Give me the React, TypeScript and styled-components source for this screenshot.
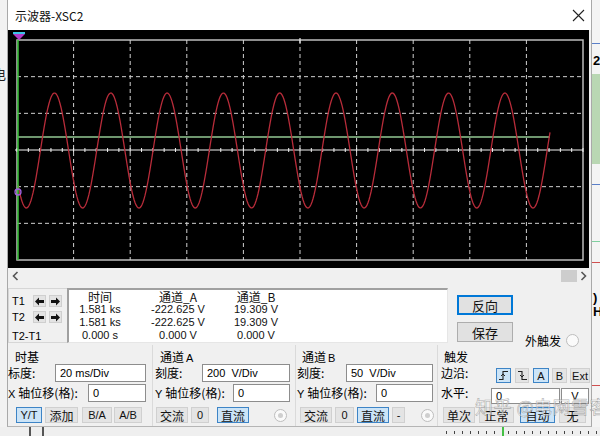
import React from 'react';
import styled, { createGlobalStyle } from 'styled-components';

const LATIN = `"Liberation Sans", "Noto Sans CJK SC", sans-serif`;
const CJK = `"Noto Sans CJK SC", "Liberation Sans", sans-serif`;

const Global = createGlobalStyle`
  html, body { margin: 0; padding: 0; width: 600px; height: 436px; overflow: hidden; background: #ececec; }
  * { box-sizing: border-box; }
`;

const Desktop = styled.div`
  width: 600px;
  height: 436px;
  display: grid;
  grid-template-columns: 7px 585px 8px;
  grid-template-rows: 427px 9px;
  background: #ececec;
  overflow: hidden;
  font-family: ${CJK};
  color: #000;
`;

const LeftStrip = styled.div`
  background: #f2f2f2;
  overflow: hidden;
  display: flex;
  flex-direction: column;
  padding-top: 66px;
  font-size: 13px;
  line-height: 16px;
`;

const ClippedGlyph = styled.span<{ $color?: string }>`
  display: block;
  margin-left: -7px;
  color: ${(p) => p.$color || '#222'};
`;

const RightStrip = styled.div`
  background: #f4f4f4;
  overflow: hidden;
  display: flex;
  flex-direction: column;
`;

const HLine = styled.div<{ $color: string; $top: number; $h?: number }>`
  margin-top: ${(p) => p.$top}px;
  height: ${(p) => p.$h || 1}px;
  background: ${(p) => p.$color};
  flex-shrink: 0;
`;

const StripText = styled.div<{ $top: number }>`
  margin-top: ${(p) => p.$top}px;
  font-family: ${LATIN};
  font-size: 13px;
  font-weight: bold;
  line-height: 14px;
  margin-left: 1px;
  flex-shrink: 0;
`;

const BottomStrip = styled.div`
  grid-column: 1 / 4;
  background: #efefef;
  display: flex;
  align-items: stretch;
`;

const Bar = styled.div<{ $left: number; $w?: number; $color?: string }>`
  margin-left: ${(p) => p.$left}px;
  width: ${(p) => p.$w || 2}px;
  background: ${(p) => p.$color || '#555'};
  flex-shrink: 0;
`;

const DashBar = styled.div<{ $left: number; $w: number }>`
  margin-left: ${(p) => p.$left}px;
  width: ${(p) => p.$w}px;
  background: repeating-linear-gradient(90deg, #444 0 1px, transparent 1px 8px);
  height: 3px;
  margin-top: 4px;
  flex-shrink: 0;
`;

const Window = styled.div`
  display: flex;
  flex-direction: column;
  background: #f0f0f0;
  border-left: 1px solid #a9a9a9;
  border-right: 1px solid #a9a9a9;
  border-bottom: 1px solid #b5b5b5;
  position: relative;
`;

const TitleBar = styled.div`
  height: 30px;
  background: #ffffff;
  display: flex;
  align-items: center;
  justify-content: space-between;
  padding-left: 7px;
  flex-shrink: 0;
`;

const Title = styled.span`
  font-family: ${CJK};
  font-size: 12px;
  color: #111;
`;

const CloseBox = styled.div`
  width: 26px;
  height: 30px;
  display: flex;
  align-items: center;
  justify-content: center;
`;

const Scope = styled.div`
  width: 581px;
  height: 238px;
  background: #000;
  flex-shrink: 0;
`;

const ScrollRow = styled.div`
  height: 16px;
  display: flex;
  align-items: center;
  flex-shrink: 0;
`;

const ScrollArrow = styled.div<{ $ml?: number }>`
  width: 12px;
  height: 16px;
  margin-left: ${(p) => p.$ml || 0}px;
  display: flex;
  align-items: center;
  justify-content: center;
`;

const Spacer = styled.div<{ $w?: number }>`
  flex: ${(p) => (p.$w !== undefined ? `0 0 ${p.$w}px` : '1')};
`;

const Thumb = styled.div`
  width: 16px;
  height: 12px;
  background: #cdcdcd;
`;

const ReadoutRow = styled.div`
  height: 61px;
  display: flex;
  align-items: flex-start;
  padding-top: 4px;
  flex-shrink: 0;
`;

const CursorBox = styled.div`
  width: 59px;
  height: 55px;
  border: 1px solid #d6d6d6;
  border-right: none;
  display: flex;
  flex-direction: column;
  padding-top: 6px;
  padding-left: 3px;
`;

const CursorRow = styled.div<{ $mt?: number }>`
  display: flex;
  align-items: center;
  height: 13px;
  margin-top: ${(p) => p.$mt || 0}px;
  font-family: ${LATIN};
  font-size: 11px;
`;

const CursorLabel = styled.span`
  width: 21px;
  flex-shrink: 0;
`;

const ArrowBtn = styled.div<{ $ml?: number }>`
  width: 13px;
  height: 12px;
  margin-left: ${(p) => p.$ml || 0}px;
  background: #e3e3e3;
  border: 1px solid #cfcfcf;
  display: flex;
  align-items: center;
  justify-content: center;
`;

const DataBox = styled.div`
  width: 381px;
  height: 55px;
  background: #fff;
  border-top: 2px solid #a0a0a0;
  border-left: 2px solid #a0a0a0;
  border-right: 1px solid #e6e6e6;
  border-bottom: 1px solid #e6e6e6;
  display: grid;
  grid-template-columns: 62px 94px 62px;
  grid-auto-rows: 13px;
  align-content: start;
`;

const Cell = styled.div<{ $head?: boolean }>`
  text-align: center;
  white-space: nowrap;
  font-family: ${(p) => (p.$head ? CJK : LATIN)};
  font-size: ${(p) => (p.$head ? 12 : 11)}px;
  line-height: 13px;
  color: #111;
`;

const ButtonCol = styled.div`
  margin-left: 9px;
  margin-top: 7px;
  width: 56px;
  display: flex;
  flex-direction: column;
  gap: 7px;
`;

const BigButton = styled.div<{ $focus?: boolean }>`
  height: 20px;
  background: #e1e1e1;
  border: ${(p) => (p.$focus ? '2px solid #0078d7' : '1px solid #adadad')};
  display: flex;
  align-items: center;
  justify-content: center;
  font-family: ${CJK};
  font-size: 13px;
  color: #111;
`;

const ExtTrig = styled.div`
  margin-left: 12px;
  margin-top: 45px;
  height: 14px;
  display: flex;
  align-items: center;
  gap: 5px;
  font-size: 12px;
`;

const Radio = styled.div<{ $ml?: number }>`
  width: 13px;
  height: 13px;
  border-radius: 50%;
  border: 1px solid #bdbdbd;
  background: #fafafa;
  margin-left: ${(p) => p.$ml || 0}px;
  flex-shrink: 0;
  display: flex;
  align-items: center;
  justify-content: center;
`;

const RadioDot = styled.div`
  width: 5px;
  height: 5px;
  border-radius: 50%;
  background: #cfcfcf;
`;

const ControlsRow = styled.div`
  height: 81px;
  display: flex;
  position: relative;
`;

const Group = styled.div<{ $w: number; $pl: number; $pr: number; $divider?: boolean }>`
  width: ${(p) => p.$w}px;
  padding-left: ${(p) => p.$pl}px;
  padding-right: ${(p) => p.$pr}px;
  padding-top: 5px;
  border-left: ${(p) => (p.$divider ? '1px solid #dadada' : 'none')};
  display: flex;
  flex-direction: column;
  flex-shrink: 0;
`;

const GroupTitle = styled.div<{ $ml: number }>`
  height: 14px;
  line-height: 14px;
  margin-left: ${(p) => p.$ml}px;
  font-size: 12px;
  white-space: nowrap;
`;

const SubLetter = styled.span`
  font-family: ${LATIN};
  font-size: 11px;
  margin-left: 2px;
`;

const FieldRow = styled.div<{ $mt?: number; $align?: string }>`
  height: 18px;
  margin-top: ${(p) => p.$mt || 0}px;
  display: flex;
  align-items: ${(p) => p.$align || 'center'};
  justify-content: space-between;
`;

const Label = styled.span`
  font-size: 12px;
  white-space: nowrap;
  line-height: 18px;
`;

const LatinX = styled.span`
  font-family: ${LATIN};
  font-size: 11px;
  margin-right: 3px;
`;

const Input = styled.div<{ $w: number; $h?: number; $center?: boolean }>`
  width: ${(p) => p.$w}px;
  height: ${(p) => p.$h || 18}px;
  background: #fff;
  border: 1px solid #8d8d8d;
  font-family: ${LATIN};
  font-size: 11px;
  display: flex;
  align-items: center;
  justify-content: ${(p) => (p.$center ? 'center' : 'flex-start')};
  padding-left: ${(p) => (p.$center ? 0 : 4)}px;
  white-space: pre;
  flex-shrink: 0;
`;

const InputPair = styled.div`
  display: flex;
  align-self: flex-start;
  margin-top: 4px;
  gap: 1px;
`;

const BtnRow = styled.div<{ $ml: number }>`
  height: 16px;
  margin-top: 5px;
  margin-left: ${(p) => p.$ml}px;
  display: flex;
  align-items: center;
`;

const SmallBtn = styled.div<{ $w: number; $ml?: number; $on?: boolean; $latin?: boolean; $h?: number }>`
  width: ${(p) => p.$w}px;
  height: ${(p) => p.$h || 16}px;
  margin-left: ${(p) => p.$ml || 0}px;
  background: ${(p) => (p.$on ? '#cce4f7' : '#e4e4e4')};
  border: 1px solid ${(p) => (p.$on ? '#3d84c6' : '#d0d0d0')};
  font-family: ${(p) => (p.$latin ? LATIN : CJK)};
  font-size: ${(p) => (p.$latin ? 11 : 12)}px;
  display: flex;
  align-items: center;
  justify-content: center;
  flex-shrink: 0;
  color: #111;
`;

const TrigBtns = styled.div`
  display: flex;
  align-self: flex-end;
  margin-bottom: -1px;
  margin-right: -1px;
`;

const Watermark = styled.div`
  position: absolute;
  left: 467px;
  top: 48px;
  font-size: 18px;
  font-family: ${CJK};
  color: rgba(255, 255, 255, 0.6);
  -webkit-text-stroke: 0.6px rgba(100, 100, 100, 0.5);
  white-space: nowrap;
  pointer-events: none;
  letter-spacing: 0.5px;
`;

/* ---------- drawings ---------- */

const FX0 = 9;
const FY0 = 10;
const FW = 566;
const FH = 220;
const DX = FW / 10;
const DY = FH / 6;

const tracePath = (): string => {
  const pts: string[] = [];
  for (let x = 10; x <= 542; x += 1) {
    const xa = x + 8;
    const y = 150.5 - 57.5 * Math.cos((2 * Math.PI * (xa - 54.5)) / 56.3) - 30;
    pts.push(`${x},${y.toFixed(2)}`);
  }
  return 'M' + pts.join(' L');
};

const ScopeDrawing: React.FC = () => {
  const vLines = Array.from({ length: 9 }, (_, i) => FX0 + (i + 1) * DX);
  const hLines = Array.from({ length: 5 }, (_, j) => FY0 + (j + 1) * DY);
  const cy = FY0 + 3 * DY;
  const cx = FX0 + 5 * DX;
  const hTicks = Array.from({ length: 51 }, (_, k) => FX0 + k * (DX / 5));
  return (
    <svg width="581" height="238" viewBox="0 0 581 238">
      <rect x={FX0} y={FY0} width={FW} height={FH} fill="none" stroke="#bdbdbd" strokeWidth="1.5" />
      {vLines.map((x, i) => (
        <line key={'v' + i} x1={x} y1={FY0} x2={x} y2={FY0 + FH} stroke="#d0d0d0" strokeWidth="1" strokeDasharray="4 3" />
      ))}
      {hLines.map((y, j) =>
        j === 2 ? null : (
          <line key={'h' + j} x1={FX0} y1={y} x2={FX0 + FW} y2={y} stroke="#d0d0d0" strokeWidth="1" strokeDasharray="4 3" />
        )
      )}
      <line x1={cx} y1={FY0 - 2} x2={cx} y2={FY0 + 3} stroke="#e8e8e8" strokeWidth="1.2" />
      <line x1={FX0 - 2} y1={cy} x2={FX0 + FW} y2={cy} stroke="#f2f2f2" strokeWidth="1.2" />
      {hTicks.map((x, k) => (
        <line key={'ht' + k} x1={x} y1={cy - 2} x2={x} y2={cy + 2} stroke="#f2f2f2" strokeWidth="1" />
      ))}
      <line x1="10" y1="107" x2="542" y2="107" stroke="#93c893" strokeWidth="1.4" />
      <path d={tracePath()} fill="none" stroke="#b82c3a" strokeWidth="1.3" />
      <line x1="10" y1={FY0} x2="10" y2={FY0 + FH} stroke="#35c235" strokeWidth="1.5" />
      <rect x="5" y="2" width="12" height="2" fill="#3cc4e6" />
      <polygon points="5,4 17,4 11,10" fill="#b03cc8" />
      <circle cx="10" cy="162" r="3" fill="none" stroke="#a060e0" strokeWidth="1.3" />
    </svg>
  );
};

const CloseIcon = () => (
  <svg width="13" height="13" viewBox="0 0 13 13">
    <path d="M1 1 L12 12 M12 1 L1 12" stroke="#222" strokeWidth="1.1" />
  </svg>
);

const Chevron: React.FC<{ dir: 'l' | 'r' }> = ({ dir }) => (
  <svg width="7" height="10" viewBox="0 0 7 10">
    <path d={dir === 'l' ? 'M5.5 1 L1.5 5 L5.5 9' : 'M1.5 1 L5.5 5 L1.5 9'} fill="none" stroke="#555" strokeWidth="1.6" />
  </svg>
);

const Arrow: React.FC<{ dir: 'l' | 'r' }> = ({ dir }) => (
  <svg width="9" height="9" viewBox="0 0 9 9">
    <polygon
      points={dir === 'l' ? '0,4.5 4,0.5 4,3 9,3 9,6 4,6 4,8.5' : '9,4.5 5,0.5 5,3 0,3 0,6 5,6 5,8.5'}
      fill="#111"
    />
  </svg>
);

const EdgeIcon: React.FC<{ rising: boolean }> = ({ rising }) => (
  <svg width="11" height="11" viewBox="0 0 11 11">
    <path d={rising ? 'M1 9.5 H5 V1.5 H10' : 'M1 1.5 H5 V9.5 H10'} fill="none" stroke="#222" strokeWidth="1.1" />
    <path d={rising ? 'M3 6 L5 4 L7 6' : 'M3 5 L5 7 L7 5'} fill="none" stroke="#222" strokeWidth="1" />
  </svg>
);

const rows = [
  ['1.581 ks', '-222.625 V', '19.309 V'],
  ['1.581 ks', '-222.625 V', '19.309 V'],
  ['0.000 s', '0.000 V', '0.000 V'],
];

const App: React.FC = () => (
  <>
    <Global />
    <Desktop>
      <LeftStrip>
        <ClippedGlyph>电</ClippedGlyph>
      </LeftStrip>
      <Window>
        <TitleBar>
          <Title>示波器-XSC2</Title>
          <CloseBox>
            <CloseIcon />
          </CloseBox>
        </TitleBar>
        <Scope>
          <ScopeDrawing />
        </Scope>
        <ScrollRow>
          <ScrollArrow $ml={1}>
            <Chevron dir="l" />
          </ScrollArrow>
          <Spacer />
          <Thumb />
          <ScrollArrow>
            <Chevron dir="r" />
          </ScrollArrow>
          <Spacer $w={2} />
        </ScrollRow>
        <ReadoutRow>
          <CursorBox>
            <CursorRow>
              <CursorLabel>T1</CursorLabel>
              <ArrowBtn>
                <Arrow dir="l" />
              </ArrowBtn>
              <ArrowBtn $ml={3}>
                <Arrow dir="r" />
              </ArrowBtn>
            </CursorRow>
            <CursorRow $mt={3}>
              <CursorLabel>T2</CursorLabel>
              <ArrowBtn>
                <Arrow dir="l" />
              </ArrowBtn>
              <ArrowBtn $ml={3}>
                <Arrow dir="r" />
              </ArrowBtn>
            </CursorRow>
            <CursorRow $mt={6}>T2-T1</CursorRow>
          </CursorBox>
          <DataBox>
            <Cell $head>时间</Cell>
            <Cell $head>通道_A</Cell>
            <Cell $head>通道_B</Cell>
            {rows.map((r, i) => r.map((v, j) => <Cell key={i + '-' + j}>{v}</Cell>))}
          </DataBox>
          <ButtonCol>
            <BigButton $focus>反向</BigButton>
            <BigButton>保存</BigButton>
          </ButtonCol>
          <ExtTrig>
            外触发
            <Radio />
          </ExtTrig>
        </ReadoutRow>
        <ControlsRow>
          <Group $w={144} $pl={0} $pr={6}>
            <GroupTitle $ml={7}>时基</GroupTitle>
            <FieldRow>
              <Label>标度:</Label>
              <Input $w={91}>20 ms/Div</Input>
            </FieldRow>
            <FieldRow $mt={2}>
              <Label>
                <LatinX>X</LatinX>轴位移(格):
              </Label>
              <Input $w={58}>0</Input>
            </FieldRow>
            <BtnRow $ml={8}>
              <SmallBtn $w={26} $on $latin>Y/T</SmallBtn>
              <SmallBtn $w={33} $ml={3}>添加</SmallBtn>
              <SmallBtn $w={30} $ml={4} $latin>B/A</SmallBtn>
              <SmallBtn $w={28} $ml={2} $latin>A/B</SmallBtn>
            </BtnRow>
          </Group>
          <Group $w={143} $pl={2} $pr={5} $divider>
            <GroupTitle $ml={5}>
              通道<SubLetter>A</SubLetter>
            </GroupTitle>
            <FieldRow>
              <Label>刻度:</Label>
              <Input $w={88}>{'200  V/Div'}</Input>
            </FieldRow>
            <FieldRow $mt={2}>
              <Label>
                <LatinX>Y</LatinX>轴位移(格):
              </Label>
              <Input $w={57}>0</Input>
            </FieldRow>
            <BtnRow $ml={1}>
              <SmallBtn $w={32}>交流</SmallBtn>
              <SmallBtn $w={18} $ml={3} $latin>0</SmallBtn>
              <SmallBtn $w={32} $ml={8} $on>直流</SmallBtn>
              <Radio $ml={25}>
                <RadioDot />
              </Radio>
            </BtnRow>
          </Group>
          <Group $w={142} $pl={1} $pr={4} $divider>
            <GroupTitle $ml={5}>
              通道<SubLetter>B</SubLetter>
            </GroupTitle>
            <FieldRow>
              <Label>刻度:</Label>
              <Input $w={87}>{'50  V/Div'}</Input>
            </FieldRow>
            <FieldRow $mt={2}>
              <Label>
                <LatinX>Y</LatinX>轴位移(格):
              </Label>
              <Input $w={57}>0</Input>
            </FieldRow>
            <BtnRow $ml={3}>
              <SmallBtn $w={32}>交流</SmallBtn>
              <SmallBtn $w={19} $ml={3} $latin>0</SmallBtn>
              <SmallBtn $w={32} $ml={3} $on>直流</SmallBtn>
              <SmallBtn $w={13} $ml={3} $latin>-</SmallBtn>
              <Radio $ml={16}>
                <RadioDot />
              </Radio>
            </BtnRow>
          </Group>
          <Group $w={154} $pl={3} $pr={2} $divider>
            <GroupTitle $ml={3}>触发</GroupTitle>
            <FieldRow>
              <Label>边沿:</Label>
              <TrigBtns>
                <SmallBtn $w={15} $h={15} $on>
                  <EdgeIcon rising />
                </SmallBtn>
                <SmallBtn $w={14} $h={15} $ml={4}>
                  <EdgeIcon rising={false} />
                </SmallBtn>
                <SmallBtn $w={16} $h={15} $ml={4} $on $latin>A</SmallBtn>
                <SmallBtn $w={15} $h={15} $ml={3} $latin>B</SmallBtn>
                <SmallBtn $w={20} $h={15} $ml={3} $latin>Ext</SmallBtn>
              </TrigBtns>
            </FieldRow>
            <FieldRow $mt={2}>
              <Label>水平:</Label>
              <InputPair>
                <Input $w={69} $h={16}>0</Input>
                <Input $w={28} $h={16} $center>V</Input>
              </InputPair>
            </FieldRow>
            <BtnRow $ml={2}>
              <SmallBtn $w={32}>单次</SmallBtn>
              <SmallBtn $w={35} $ml={4}>正常</SmallBtn>
              <SmallBtn $w={35} $ml={6} $on>自动</SmallBtn>
              <SmallBtn $w={27} $ml={4}>无</SmallBtn>
            </BtnRow>
          </Group>
          <Watermark>知乎 @电网雪客</Watermark>
        </ControlsRow>
      </Window>
      <RightStrip>
        <HLine $color="#5a7fc8" $top={43} />
        <StripText $top={10}>2</StripText>
        <HLine $color="#b9d7b3" $top={6} $h={90} />
        <HLine $color="#5a7fc8" $top={20} />
        <HLine $color="#7fcf9f" $top={56} />
        <HLine $color="#d05050" $top={20} />
        <StripText $top={28}>)</StripText>
        <StripText $top={0}>H</StripText>
        <HLine $color="#d05050" $top={66} />
      </RightStrip>
      <BottomStrip>
        <Bar $left={29} />
        <Bar $left={11} />
        <DashBar $left={402} $w={50} />
        <Bar $left={6} $color="#45c045" />
        <DashBar $left={4} $w={90} />
      </BottomStrip>
    </Desktop>
  </>
);

export default App;
